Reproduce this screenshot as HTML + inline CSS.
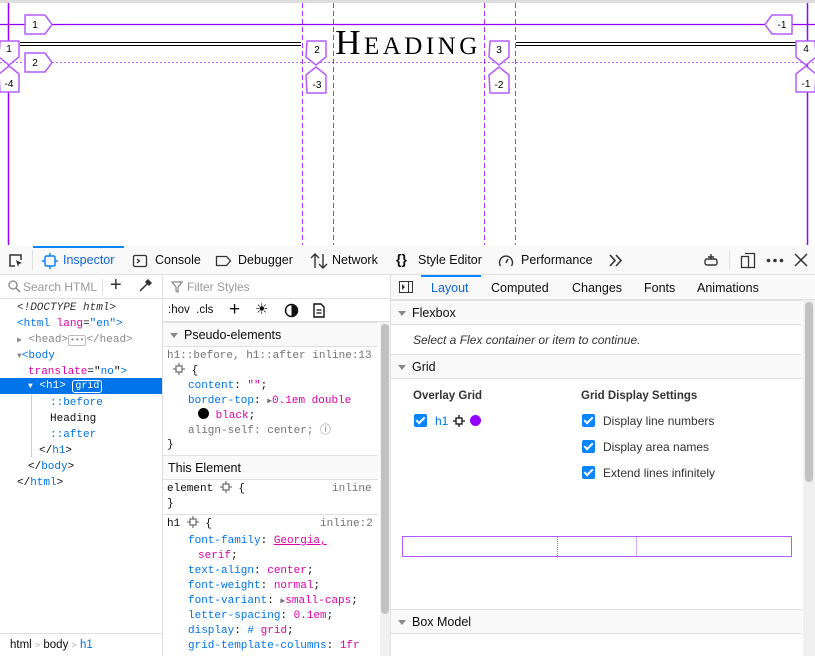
<!DOCTYPE html>
<html><head><meta charset="utf-8"><style>
*{box-sizing:border-box;margin:0;padding:0}
body{width:815px;height:656px;overflow:hidden;background:#fff;font-family:"Liberation Sans",sans-serif;font-size:12px;color:#0c0c0d;position:relative}
.abs{position:absolute}
.mono{font-family:"Liberation Mono",monospace;font-size:11px}
.tb{top:246px;left:0;width:815px;height:29px;background:#f9f9fa;border-bottom:1px solid #e0e0e2}
.tab{position:absolute;top:7px;font-size:12.5px;color:#0c0c0d}
.row{position:absolute;left:0;height:16px;line-height:16px;white-space:nowrap}
.tag{color:#0074e8}.attr{color:#dd00a9}.val{color:#dd00a9}.gray{color:#737373}
.sechead{position:absolute;background:#f9f9fa;border-top:1px solid #e0e0e2;border-bottom:1px solid #e0e0e2;height:25px;line-height:24px;font-size:12.5px}
.cb{position:absolute;width:13px;height:13px;background:#0a84ff;border-radius:2px}
.cb:after{content:"";position:absolute;left:4px;top:1px;width:3px;height:7px;border:solid #fff;border-width:0 2px 2px 0;transform:rotate(45deg)}
.tri{display:inline-block;width:0;height:0;border-left:4px solid transparent;border-right:4px solid transparent;border-top:5px solid #888;margin-right:6px;vertical-align:middle}
.xh{display:inline-block;width:12px;height:12px;vertical-align:-2px}
</style></head><body>
<svg width="0" height="0" style="position:absolute"><defs><symbol id="xh" viewBox="0 0 12 12"><rect x="3" y="3" width="6" height="6" fill="none" stroke="currentColor" stroke-width="1.3"/><path d="M6 0v3M6 9v3M0 6h3M9 6h3" stroke="currentColor" stroke-width="1.3"/></symbol></defs></svg>
<!-- page -->
<div class="abs" style="top:0;left:0;width:815px;height:3px;background:#ddd"></div>
<svg class="abs" style="top:0;left:0" width="815" height="245">
 <g stroke="#9400ff" fill="none">
  <line x1="8.5" y1="3" x2="8.5" y2="245" stroke-width="1.5"/>
  <line x1="807.5" y1="3" x2="807.5" y2="245" stroke-width="1.5"/>
  <line x1="0" y1="24.5" x2="815" y2="24.5" stroke-width="1.2"/>
  <line x1="0" y1="62.5" x2="815" y2="62.5" stroke-width="1" stroke-dasharray="2,2" opacity=".6"/>
  <g stroke-dasharray="5,3" opacity=".8">
   <line x1="302.5" y1="3" x2="302.5" y2="245"/><line x1="333.5" y1="3" x2="333.5" y2="245"/>
   <line x1="484.5" y1="3" x2="484.5" y2="245"/><line x1="515.5" y1="3" x2="515.5" y2="245"/>
  </g>
 </g>
 <g stroke="#000" stroke-width="1"><line x1="20" y1="42.5" x2="301" y2="42.5"/><line x1="20" y1="45.5" x2="301" y2="45.5"/>
 <line x1="516" y1="42.5" x2="800" y2="42.5"/><line x1="516" y1="45.5" x2="800" y2="45.5"/></g>
 <g stroke="#b45bff" stroke-width="1.5" fill="#fff" stroke-linejoin="round">
  <path d="M25 15h20l7 9.5-7 9.5h-20z"/>
  <path d="M25 53h20l7 9.5-7 9.5h-20z"/>
  <path d="M792 15h-20l-7 9.5 7 9.5h20z"/>
  <path d="M0 41h19v16l-10 8-10-8z"/><path d="M0 92h19v-18l-10-8-10 8z"/>
  <path d="M307 41h19v16l-10 8-10-8z"/><path d="M307 93h19v-18l-10-8-10 8z"/>
  <path d="M490 41h19v16l-10 8-10-8z"/><path d="M490 93h19v-18l-10-8-10 8z"/>
  <path d="M815 41h-19v16l10 8 10-8z"/><path d="M815 92h-19v-18l10-8 10 8z"/>
 </g>
 <g font-family="Liberation Sans" font-size="10" fill="#000" text-anchor="middle">
  <text x="35" y="28">1</text><text x="35" y="66">2</text><text x="782" y="28">-1</text>
  <text x="9" y="52">1</text><text x="9" y="87">-4</text>
  <text x="317" y="53">2</text><text x="317" y="88">-3</text>
  <text x="499" y="53">3</text><text x="499" y="88">-2</text>
  <text x="806" y="52">4</text><text x="806" y="87">-1</text>
 </g>
 <text x="408" y="54" text-anchor="middle" font-family="Liberation Serif" font-size="35" letter-spacing="3.5" fill="#000" style="font-variant:small-caps">Heading</text>
</svg>
<!-- toolbar -->
<div class="abs tb">
 <div class="abs" style="left:33px;top:0;width:91px;height:2px;background:#0a84ff"></div>
 <div class="abs" style="left:32px;top:4px;width:1px;height:20px;background:#e0e0e2"></div>
 <svg class="abs" style="left:8px;top:7px" width="16" height="16"><path d="M7 13H2V2h11v5" fill="none" stroke="#333" stroke-width="1.5"/><path d="M8 7l6 3-3 1-1 3z" fill="#333"/></svg>
 <svg class="abs" style="left:42px;top:7px" width="16" height="16"><rect x="3" y="3" width="10" height="10" rx="1.5" fill="none" stroke="#0a84ff" stroke-width="1.5"/><path d="M8 0v3M8 13v3M0 8h3M13 8h3" stroke="#0a84ff" stroke-width="1.5"/></svg>
 <span class="tab" style="left:63px;color:#0a64d8">Inspector</span>
 <svg class="abs" style="left:132px;top:7px" width="16" height="16"><rect x="1.5" y="2.5" width="13" height="11" rx="1.5" fill="none" stroke="#333" stroke-width="1.3"/><path d="M5 6l2.5 2L5 10" fill="none" stroke="#333" stroke-width="1.3"/></svg>
 <span class="tab" style="left:155px">Console</span>
 <svg class="abs" style="left:215px;top:7px" width="18" height="16"><path d="M1.5 3.5h10l4 4.5-4 4.5h-10z" fill="none" stroke="#333" stroke-width="1.3"/></svg>
 <span class="tab" style="left:238px">Debugger</span>
 <svg class="abs" style="left:310px;top:6px" width="18" height="18"><path d="M5 16V2M1 6l4-4 4 4M13 2v14M9 12l4 4 4-4" fill="none" stroke="#333" stroke-width="1.4"/></svg>
 <span class="tab" style="left:332px">Network</span>
 <span class="tab" style="left:396px;font-weight:bold;font-size:14px;top:5px">{}</span>
 <span class="tab" style="left:418px">Style Editor</span>
 <svg class="abs" style="left:498px;top:7px" width="16" height="16"><path d="M2.5 13A6.5 6.5 0 1 1 13.5 13" fill="none" stroke="#333" stroke-width="1.4"/><path d="M8 10l2-4" stroke="#333" stroke-width="1.5"/></svg>
 <span class="tab" style="left:521px">Performance</span>
 <svg class="abs" style="left:608px;top:8px" width="16" height="13"><path d="M2 1l5 5.5-5 5.5M8 1l5 5.5-5 5.5" fill="none" stroke="#333" stroke-width="1.6"/></svg>
 <svg class="abs" style="left:703px;top:6px" width="16" height="16"><rect x="2" y="7" width="12" height="6" rx="2" fill="none" stroke="#333" stroke-width="1.4"/><path d="M8 2v5M5 5h6" stroke="#333" stroke-width="1.4"/></svg>
 <div class="abs" style="left:729px;top:4px;width:1px;height:20px;background:#e0e0e2"></div>
 <svg class="abs" style="left:740px;top:6px" width="16" height="17"><rect x="1.5" y="4.5" width="7" height="11" fill="none" stroke="#333" stroke-width="1.3"/><path d="M5 1.5h9.5v14H8" fill="none" stroke="#333" stroke-width="1.3"/></svg>
 <svg class="abs" style="left:766px;top:12px" width="18" height="5"><circle cx="2.5" cy="2.5" r="1.8" fill="#333"/><circle cx="9" cy="2.5" r="1.8" fill="#333"/><circle cx="15.5" cy="2.5" r="1.8" fill="#333"/></svg>
 <svg class="abs" style="left:794px;top:7px" width="14" height="14"><path d="M1 1l12 12M13 1L1 13" stroke="#333" stroke-width="1.5"/></svg>
</div>
<!-- left panel -->
<div class="abs" style="left:162px;top:275px;width:1px;height:381px;background:#e0e0e2"></div>
<div class="abs" style="left:0;top:275px;width:162px;height:24px;border-bottom:1px solid #e0e0e2">
 <svg class="abs" style="left:8px;top:5px" width="13" height="13"><circle cx="5" cy="5" r="4" fill="none" stroke="#888" stroke-width="1.3"/><path d="M8 8l4 4" stroke="#888" stroke-width="1.5"/></svg>
 <span class="abs" style="left:23px;top:5px;color:#999">Search HTML</span>
 <div class="abs" style="left:102px;top:4px;width:1px;height:16px;background:#ddd"></div>
 <span class="abs" style="left:110px;top:-1px;font-size:20px;color:#333">+</span>
 <svg class="abs" style="left:138px;top:4px" width="14" height="14"><path d="M2 12l7-7M8 2l4 4M10 1l3 3-2 2-3-3z" stroke="#333" stroke-width="1.5" fill="#333"/></svg>
</div>
<div class="mono">
<div class="row" style="top:300px;left:17px"><i style="color:#333">&lt;!DOCTYPE html&gt;</i></div>
<div class="row" style="top:316px;left:17px"><span class="tag">&lt;html</span> <span class="attr">lang</span>=<span class="tag">"en"</span><span class="tag">&gt;</span></div>
<div class="row" style="top:332px;left:17px;color:#888"><span style="font-size:8px">▶</span> &lt;head&gt;<span style="border:1px solid #bbb;border-radius:2px;font-size:8px;padding:0 1px">•••</span>&lt;/head&gt;</div>
<div class="row" style="top:348px;left:17px"><span style="font-size:8px;color:#888">▼</span><span class="tag">&lt;body</span></div>
<div class="row" style="top:364px;left:28px"><span class="attr">translate</span>="<span class="tag">no</span>"<span class="tag">&gt;</span></div>
<div class="row" style="top:378px;width:162px;background:#0074e8;color:#fff;padding-left:28px"><span style="font-size:8px">▼</span> &lt;h1&gt; <span style="border:1px solid #fff;border-radius:3px;padding:0 2px;font-size:10px">grid</span></div>
<div class="abs" style="left:31px;top:395px;width:1px;height:62px;background:#ccc"></div>
<div class="row" style="top:395px;left:50px" ><span class="tag">::before</span></div>
<div class="row" style="top:411px;left:50px">Heading</div>
<div class="row" style="top:427px;left:50px"><span class="tag">::after</span></div>
<div class="row" style="top:443px;left:39px">&lt;/<span class="tag">h1</span>&gt;</div>
<div class="row" style="top:459px;left:28px">&lt;/<span class="tag">body</span>&gt;</div>
<div class="row" style="top:475px;left:17px">&lt;/<span class="tag">html</span>&gt;</div>
</div>
<div class="abs" style="left:0;top:633px;width:162px;height:23px;border-top:1px solid #e0e0e2;line-height:22px;padding-left:10px;font-size:11.5px">html <span style="color:#aaa;font-size:9px">&gt;</span> body <span style="color:#aaa;font-size:9px">&gt;</span> <span style="color:#0074e8">h1</span></div>
<!-- middle -->
<div class="abs" style="left:163px;top:275px;width:227px;height:24px;border-bottom:1px solid #e0e0e2">
 <svg class="abs" style="left:8px;top:6px" width="12" height="12"><path d="M1 1h10L7 6v5L5 10V6z" fill="none" stroke="#888" stroke-width="1.2"/></svg>
 <span class="abs" style="left:24px;top:5px;color:#999">Filter Styles</span>
</div>
<div class="abs" style="left:163px;top:299px;width:227px;height:23px;border-bottom:1px solid #e0e0e2">
 <span class="abs" style="left:5px;top:5px;font-size:11.5px">:hov&nbsp;&nbsp;.cls</span>
 <span class="abs" style="left:66px;top:0;font-size:19px">+</span>
 <span class="abs" style="left:92px;top:1px;font-size:15px">☀</span>
 <svg class="abs" style="left:121px;top:4px" width="15" height="15"><circle cx="7.5" cy="7.5" r="6" fill="none" stroke="#111" stroke-width="1.5"/><path d="M7.5 1.5a6 6 0 0 1 0 12z" fill="#111"/></svg>
 <svg class="abs" style="left:150px;top:4px" width="12" height="15"><path d="M1 1h7l3 3v10H1z" fill="none" stroke="#111" stroke-width="1.4"/><path d="M3.5 7h5M3.5 10h5" stroke="#111" stroke-width="1.2"/></svg>
</div>
<div class="abs" style="left:380px;top:322px;width:10px;height:334px;background:#f0f0f0"></div>
<div class="abs" style="left:381px;top:324px;width:8px;height:290px;background:#c1c1c1;border-radius:4px"></div>
<div class="sechead" style="left:163px;top:322px;width:215px;padding-left:7px"><span class="tri"></span>Pseudo-elements</div>
<div class="mono">
<div class="row gray" style="top:348px;left:167px">h1::before, h1::after inline:13</div>
<div class="row" style="top:363px;left:173px"><svg class="xh gray" style="color:#737373"><use href="#xh"/></svg> {</div>
<div class="row" style="top:378px;left:188px"><span class="tag">content</span>: <span class="val">""</span>;</div>
<div class="row" style="top:393px;left:188px"><span class="tag">border-top</span>: <span class="gray" style="font-size:8px">▶</span><span class="val">0.1em double</span></div>
<div class="row" style="top:408px;left:198px"><span style="display:inline-block;width:11px;height:11px;border-radius:50%;background:#000;vertical-align:-1px"></span> <span class="val">black</span>;</div>
<div class="row gray" style="top:423px;left:188px">align-self: center; ⓘ</div>
<div class="row" style="top:437px;left:167px">}</div>
</div>
<div class="sechead" style="left:163px;top:455px;width:215px;padding-left:5px">This Element</div>
<div class="mono">
<div class="row" style="top:481px;left:167px">element <svg class="xh" style="color:#737373"><use href="#xh"/></svg> {<span class="gray" style="position:absolute;left:165px">inline</span></div>
<div class="row" style="top:496px;left:167px">}</div>
<div class="abs" style="left:163px;top:514px;width:215px;height:1px;background:#e0e0e2"></div>
<div class="row" style="top:516px;left:167px">h1 <svg class="xh" style="color:#737373"><use href="#xh"/></svg> {<span class="gray" style="position:absolute;left:153px">inline:2</span></div>
<div class="row" style="top:533px;left:188px"><span class="tag">font-family</span>: <span class="val" style="text-decoration:underline">Georgia,</span></div>
<div class="row" style="top:548px;left:198px"><span class="val">serif</span>;</div>
<div class="row" style="top:563px;left:188px"><span class="tag">text-align</span>: <span class="val">center</span>;</div>
<div class="row" style="top:578px;left:188px"><span class="tag">font-weight</span>: <span class="val">normal</span>;</div>
<div class="row" style="top:593px;left:188px"><span class="tag">font-variant</span>: <span class="gray" style="font-size:8px">▶</span><span class="val">small-caps</span>;</div>
<div class="row" style="top:608px;left:188px"><span class="tag">letter-spacing</span>: <span class="val">0.1em</span>;</div>
<div class="row" style="top:623px;left:188px"><span class="tag">display</span>: <span class="tag">#</span> <span class="val">grid</span>;</div>
<div class="row" style="top:638px;left:188px"><span class="tag">grid-template-columns</span>: <span class="val">1fr</span></div>
</div>
<!-- right -->
<div class="abs" style="left:390px;top:275px;width:1px;height:381px;background:#e0e0e2"></div>
<div class="abs" style="left:391px;top:275px;width:424px;height:25px;background:#f9f9fa;border-bottom:1px solid #e0e0e2">
 <svg class="abs" style="left:8px;top:6px" width="14" height="12"><rect x=".5" y=".5" width="13" height="11" fill="none" stroke="#333"/><path d="M9.5 1v10" stroke="#333"/><path d="M3 3l3 3-3 3z" fill="#333"/></svg>
 <div class="abs" style="left:30px;top:0;width:60px;height:2px;background:#0a84ff"></div>
 <span class="abs" style="left:40px;top:6px;color:#0a64d8;font-size:12.5px">Layout</span>
 <span class="abs" style="left:100px;top:6px;font-size:12.5px">Computed</span>
 <span class="abs" style="left:181px;top:6px;font-size:12.5px">Changes</span>
 <span class="abs" style="left:253px;top:6px;font-size:12.5px">Fonts</span>
 <span class="abs" style="left:306px;top:6px;font-size:12.5px">Animations</span>
</div>
<div class="abs" style="left:803px;top:300px;width:12px;height:356px;background:#f0f0f0"></div>
<div class="abs" style="left:805px;top:302px;width:8px;height:180px;background:#c1c1c1;border-radius:4px"></div>
<div class="sechead" style="left:391px;top:300px;width:411px;padding-left:7px"><span class="tri"></span>Flexbox</div>
<div class="abs" style="left:413px;top:333px;font-style:italic;color:#333">Select a Flex container or item to continue.</div>
<div class="sechead" style="left:391px;top:354px;width:411px;padding-left:7px"><span class="tri"></span>Grid</div>
<div class="abs" style="left:413px;top:390px;font-weight:bold;font-size:11.5px;color:#333">Overlay Grid</div>
<div class="cb" style="left:414px;top:414px"></div>
<span class="abs" style="left:435px;top:414px;color:#0074e8">h1</span>
<svg class="abs" style="left:453px;top:415px;color:#111" width="12" height="12"><use href="#xh"/></svg>
<div class="abs" style="left:470px;top:415px;width:11px;height:11px;border-radius:50%;background:#9400ff"></div>
<div class="abs" style="left:581px;top:390px;font-weight:bold;font-size:11.5px;color:#333">Grid Display Settings</div>
<div class="cb" style="left:582px;top:414px"></div><span class="abs" style="left:603px;top:414px;color:#333">Display line numbers</span>
<div class="cb" style="left:582px;top:440px"></div><span class="abs" style="left:603px;top:440px;color:#333">Display area names</span>
<div class="cb" style="left:582px;top:466px"></div><span class="abs" style="left:603px;top:466px;color:#333">Extend lines infinitely</span>
<div class="abs" style="left:402px;top:536px;width:390px;height:21px;border:1.5px solid #b45bff"></div>
<div class="abs" style="left:557px;top:537px;width:0;height:19px;border-left:1px dotted #b45bff"></div>
<div class="abs" style="left:636px;top:537px;width:0;height:19px;border-left:1px solid #d9a8ff"></div>
<div class="sechead" style="left:391px;top:609px;width:411px;padding-left:7px"><span class="tri"></span>Box Model</div>
</body></html>
